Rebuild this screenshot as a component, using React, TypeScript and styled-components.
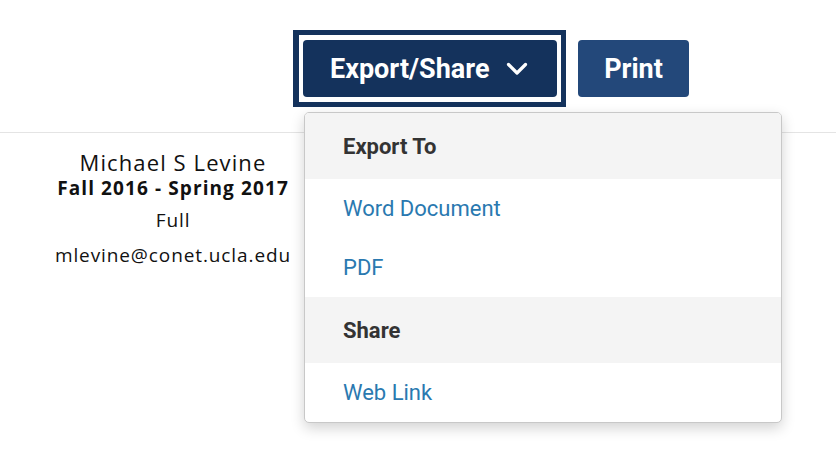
import React from 'react';
import styled, { createGlobalStyle } from 'styled-components';

const GlobalStyle = createGlobalStyle`
  body {
    margin: 0;
    background: #fff;
    font-family: Roboto, "Liberation Sans", sans-serif;
  }
`;

const App = () => {
  return (
    <>
      <GlobalStyle />
      <Page>
        <Header>
          <MenuWrap>
            <FocusRing>
              <ExportButton type="button">
                Export/Share
                <svg width="22" height="14" viewBox="0 0 22 14" fill="none">
                  <path d="M2.5 2.5 L11 11 L19.5 2.5" stroke="#fff" strokeWidth="3.2" strokeLinecap="round" strokeLinejoin="round" />
                </svg>
              </ExportButton>
            </FocusRing>
            <Dropdown>
              <GroupLabel>Export To</GroupLabel>
              <Item>Word Document</Item>
              <Item>PDF</Item>
              <GroupLabel>Share</GroupLabel>
              <Item>Web Link</Item>
            </Dropdown>
          </MenuWrap>
          <PrintButton type="button">Print</PrintButton>
        </Header>
        <Profile>
          <Name>Michael S Levine</Name>
          <Term>Fall 2016 - Spring 2017</Term>
          <Detail>Full</Detail>
          <Detail>mlevine@conet.ucla.edu</Detail>
        </Profile>
      </Page>
    </>
  );
};

export default App;

const Page = styled.div`
  width: 836px;
  height: 456px;
  overflow: hidden;
`;

const Header = styled.header`
  display: flex;
  align-items: flex-start;
  gap: 12px;
  height: 133px;
  box-sizing: border-box;
  padding: 30px 0 0 293px;
  border-bottom: 1px solid #e4e4e4;
`;

const MenuWrap = styled.div`
  position: relative;
`;

const FocusRing = styled.div`
  display: flex;
  border: 5px solid #14325c;
  border-left-width: 6px;
  padding: 5px 4px 5px 4px;
  background: #fff;
`;

const ExportButton = styled.button`
  display: flex;
  align-items: center;
  gap: 17px;
  height: 57px;
  width: 254px;
  padding: 0 0 0 27px;
  border: none;
  border-radius: 4px;
  background: #14325c;
  color: #fff;
  font-family: Roboto, "Liberation Sans", sans-serif;
  font-weight: 700;
  font-size: 27px;
  cursor: pointer;
`;

const PrintButton = styled.button`
  margin-top: 10px;
  height: 57px;
  width: 111px;
  border: none;
  border-radius: 4px;
  background: #23487a;
  color: #fff;
  font-family: Roboto, "Liberation Sans", sans-serif;
  font-weight: 700;
  font-size: 27px;
  cursor: pointer;
`;

const Dropdown = styled.div`
  position: absolute;
  top: 82px;
  left: 11px;
  width: 478px;
  box-sizing: border-box;
  background: #fff;
  border: 1px solid #c8c8c8;
  border-radius: 5px;
  overflow: hidden;
  box-shadow: 0 5px 14px rgba(0, 0, 0, 0.18);
  z-index: 2;
`;

const GroupLabel = styled.div`
  display: flex;
  align-items: center;
  height: 66px;
  padding-left: 38px;
  background: #f4f4f4;
  color: #333;
  font-weight: 700;
  font-size: 22px;
`;

const Item = styled.div`
  display: flex;
  align-items: center;
  height: 59px;
  padding-left: 38px;
  color: #2a79b0;
  font-size: 22px;
`;

const Profile = styled.div`
  display: flex;
  flex-direction: column;
  align-items: center;
  width: 346px;
  padding-top: 16px;
  color: #111;
  font-family: "Open Sans", Lato, sans-serif;
`;

const Name = styled.div`
  font-size: 22px;
  line-height: 26px;
  letter-spacing: 1.1px;
`;

const Term = styled.div`
  margin-bottom: 2px;
  font-size: 19px;
  font-weight: 700;
  line-height: 26px;
  letter-spacing: 1.1px;
`;

const Detail = styled.div`
  font-size: 19px;
  line-height: 35px;
  letter-spacing: 0.9px;
`;
